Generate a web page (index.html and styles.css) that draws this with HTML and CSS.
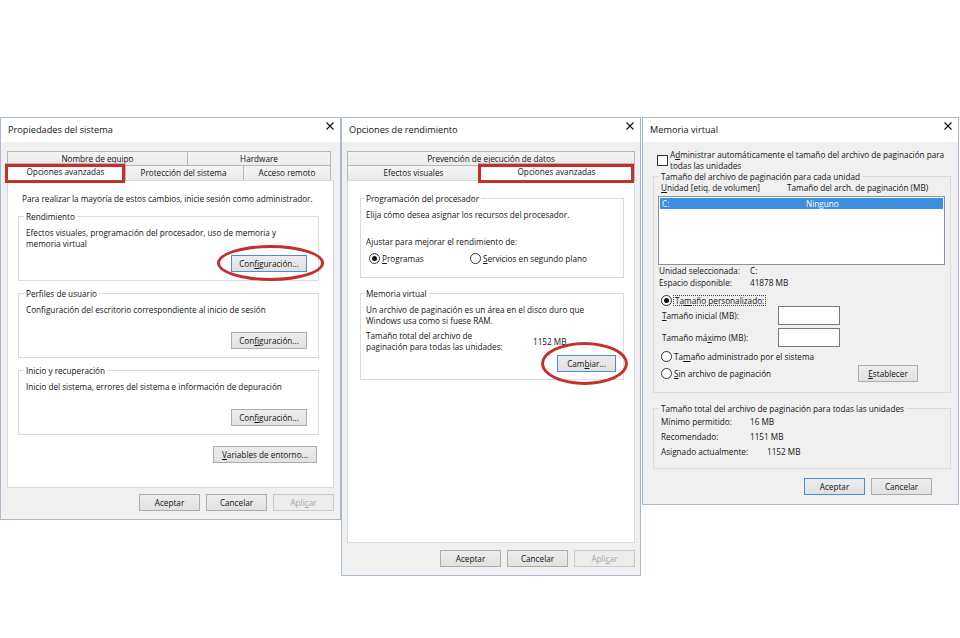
FILE: index.html
```html
<!DOCTYPE html>
<html lang="es">
<head>
    <meta charset="UTF-8">
    <meta name="viewport" content="width=device-width, initial-scale=1.0">
    <title>Memoria virtual</title>
    <link rel="stylesheet" href="styles.css">
</head>
<body>
<div class="desk">

    <!-- Propiedades del sistema -->
    <div class="dialog dlg-system">
        <div class="titlebar">
            <span class="title">Propiedades del sistema</span>
            <svg class="close" viewBox="0 0 8 8"><path d="M0.5 0.5 7.5 7.5 M7.5 0.5 0.5 7.5"/></svg>
        </div>
        <div class="client">
            <div class="tabs">
                <div class="tab-row back">
                    <div class="tab t-equipo">Nombre de equipo</div>
                    <div class="tab t-hardware">Hardware</div>
                </div>
                <div class="tab-row front">
                    <div class="tab current t-avanzadas">Opciones avanzadas</div>
                    <div class="tab t-proteccion">Protección del sistema</div>
                    <div class="tab t-remoto">Acceso remoto</div>
                </div>
            </div>
            <div class="panel">
                <p class="intro">Para realizar la mayoría de estos cambios, inicie sesión como administrador.</p>

                <fieldset class="group">
                    <legend>Rendimiento</legend>
                    <p class="gtext">Efectos visuales, programación del procesador, uso de memoria y<br>memoria virtual</p>
                    <div class="btn-row">
                        <span class="mark mark-config">
                            <button class="btn btn-config focus">Con<u>f</u>iguración...</button>
                        </span>
                    </div>
                </fieldset>

                <fieldset class="group">
                    <legend>Perfiles de usuario</legend>
                    <p class="gtext">Configuración del escritorio correspondiente al inicio de sesión</p>
                    <div class="btn-row">
                        <button class="btn btn-config">Con<u>f</u>iguración...</button>
                    </div>
                </fieldset>

                <fieldset class="group">
                    <legend>Inicio y recuperación</legend>
                    <p class="gtext">Inicio del sistema, errores del sistema e información de depuración</p>
                    <div class="btn-row">
                        <button class="btn btn-config">Con<u>f</u>iguración...</button>
                    </div>
                </fieldset>

                <div class="wide-row">
                    <button class="btn btn-env"><u>V</u>ariables de entorno...</button>
                </div>
            </div>
            <div class="footer">
                <button class="btn">Aceptar</button>
                <button class="btn">Cancelar</button>
                <button class="btn" disabled>Apli<u>c</u>ar</button>
            </div>
        </div>
    </div>

    <!-- Opciones de rendimiento -->
    <div class="dialog dlg-perf">
        <div class="titlebar">
            <span class="title">Opciones de rendimiento</span>
            <svg class="close" viewBox="0 0 8 8"><path d="M0.5 0.5 7.5 7.5 M7.5 0.5 0.5 7.5"/></svg>
        </div>
        <div class="client">
            <div class="tabs">
                <div class="tab-row back">
                    <div class="tab t-dep">Prevención de ejecución de datos</div>
                </div>
                <div class="tab-row front">
                    <div class="tab t-efectos">Efectos visuales</div>
                    <div class="tab current t-avanzadas2">Opciones avanzadas</div>
                </div>
            </div>
            <div class="panel">
                <fieldset class="group g-cpu">
                    <legend>Programación del procesador</legend>
                    <p>Elija cómo desea asignar los recursos del procesador.</p>
                    <p class="adjust">Ajustar para mejorar el rendimiento de:</p>
                    <div class="radio-row">
                        <label class="radio-opt first"><span class="radio checked"></span><span><u>P</u>rogramas</span></label>
                        <label class="radio-opt"><span class="radio"></span><span><u>S</u>ervicios en segundo plano</span></label>
                    </div>
                </fieldset>

                <fieldset class="group g-vmem">
                    <legend>Memoria virtual</legend>
                    <p>Un archivo de paginación es un área en el disco duro que<br>Windows usa como si fuese RAM.</p>
                    <div class="total-row">
                        <span class="total-label">Tamaño total del archivo de<br>paginación para todas las unidades:</span>
                        <span>1152 MB</span>
                    </div>
                    <div class="btn-row">
                        <span class="mark mark-change">
                            <button class="btn btn-change focus">Cam<u>b</u>iar...</button>
                        </span>
                    </div>
                </fieldset>
            </div>
            <div class="footer">
                <button class="btn">Aceptar</button>
                <button class="btn">Cancelar</button>
                <button class="btn" disabled>Apli<u>c</u>ar</button>
            </div>
        </div>
    </div>

    <!-- Memoria virtual -->
    <div class="dialog dlg-vm">
        <div class="titlebar">
            <span class="title">Memoria virtual</span>
            <svg class="close" viewBox="0 0 8 8"><path d="M0.5 0.5 7.5 7.5 M7.5 0.5 0.5 7.5"/></svg>
        </div>
        <div class="client">
            <label class="check-row">
                <span class="checkbox"></span>
                <span>A<u>d</u>ministrar automáticamente el tamaño del archivo de paginación para<br>todas las unidades</span>
            </label>

            <fieldset class="group g-drive">
                <legend>Tamaño del archivo de paginación para cada unidad</legend>
                <div class="cols">
                    <span class="col-drive"><u>U</u>nidad [etiq. de volumen]</span>
                    <span>Tamaño del arch. de paginación (MB)</span>
                </div>
                <div class="listbox">
                    <div class="list-item selected">
                        <span class="item-drive">C:</span>
                        <span>Ninguno</span>
                    </div>
                </div>
                <div class="info">
                    <span class="info-label">Unidad seleccionada:</span><span>C:</span>
                </div>
                <div class="info">
                    <span class="info-label">Espacio disponible:</span><span>41878 MB</span>
                </div>

                <label class="radio-line custom">
                    <span class="radio checked"></span>
                    <span class="focus-box">Ta<u>m</u>año personalizado:</span>
                </label>
                <div class="size-row">
                    <span class="size-label"><u>T</u>amaño inicial (MB):</span>
                    <span class="input"></span>
                </div>
                <div class="size-row second">
                    <span class="size-label">Tamaño má<u>x</u>imo (MB):</span>
                    <span class="input"></span>
                </div>
                <label class="radio-line managed">
                    <span class="radio"></span>
                    <span>Ta<u>m</u>año administrado por el sistema</span>
                </label>
                <div class="radio-line none">
                    <span class="radio"></span>
                    <span><u>S</u>in archivo de paginación</span>
                    <button class="btn btn-set"><u>E</u>stablecer</button>
                </div>
            </fieldset>

            <fieldset class="group g-totals">
                <legend>Tamaño total del archivo de paginación para todas las unidades</legend>
                <div class="trow"><span class="t-label">Mínimo permitido:</span><span>16 MB</span></div>
                <div class="trow"><span class="t-label">Recomendado:</span><span>1151 MB</span></div>
                <div class="trow"><span class="t-label wide">Asignado actualmente:</span><span>1152 MB</span></div>
            </fieldset>

            <div class="footer">
                <button class="btn focus">Aceptar</button>
                <button class="btn">Cancelar</button>
            </div>
        </div>
    </div>

</div>
</body>
</html>
```

FILE: styles.css
```css
*,
*::before,
*::after {
    box-sizing: border-box;
}

body {
    margin: 0;
    background: #fff;
    font-family: "Open Sans", "Noto Sans", sans-serif;
    font-size: 8.2px;
    line-height: 11px;
    color: #141414;
}

p {
    margin: 0;
}

u {
    text-decoration-thickness: 1px;
    text-underline-offset: 1px;
}

.desk {
    display: flex;
    align-items: flex-start;
    padding-top: 117px;
    height: 638px;
    overflow: hidden;
}

/* window frame */
.dialog {
    display: flex;
    flex-direction: column;
    flex: none;
    background: #f0f0f0;
    border: 1px solid #a9b9d1;
}

.dlg-system {
    width: 341px;
    height: 403px;
}

.dlg-perf {
    width: 300px;
    height: 459px;
}

.dlg-vm {
    width: 317px;
    height: 388px;
    margin-left: 1px;
}

.titlebar {
    flex: none;
    height: 24px;
    background: #fff;
    display: flex;
    justify-content: space-between;
    padding: 0 6px 0 7px;
}

.title {
    font-size: 9.2px;
    line-height: 24px;
}

.close {
    width: 8px;
    height: 8px;
    margin-top: 4px;
    stroke: #111;
    stroke-width: 1.1;
    fill: none;
}

.client {
    flex: 1;
    display: flex;
    flex-direction: column;
}

.dlg-system .client {
    padding: 9px 6px 0;
}

.dlg-perf .client {
    padding: 9px 5px 0;
}

.dlg-vm .client {
    padding: 7px 7px 0 10px;
}

/* tabs */
.tabs {
    display: flex;
    flex-direction: column;
}

.tab-row {
    display: flex;
}

.tab-row.back {
    height: 14px;
}

.tab-row.front {
    height: 15px;
    position: relative;
    z-index: 1;
}

.tab {
    flex: none;
    border: 1px solid #b7b7b7;
    border-bottom: none;
    background: linear-gradient(#f4f4f4, #ebebeb);
    text-align: center;
    line-height: 13px;
    white-space: nowrap;
}

.tab + .tab {
    margin-left: -1px;
}

.tab.current {
    position: relative;
    background: #fff;
    height: 18px;
    margin: -2px -2px -1px -2px;
    line-height: 16px;
    z-index: 2;
}

.tab.current::after {
    content: '';
    position: absolute;
    top: 0;
    bottom: -2px;
    left: -1px;
    right: 0;
    border: 3px solid #c4302b;
}

.t-equipo { width: 181px; }
.t-hardware { width: 144px; }
.t-avanzadas { width: 121px; }
.t-proteccion { width: 121px; }
.t-remoto { width: 88px; }

.t-dep { width: 288px; }
.t-efectos { width: 133px; }
.t-avanzadas2 { width: 157px; }

.panel {
    position: relative;
    background: #fff;
    border: 1px solid #d9d9d9;
}

.dlg-system .panel {
    height: 308px;
    padding: 12px 0 0 10px;
}

.dlg-perf .panel {
    height: 363px;
    padding: 12px 0 0 12px;
}

.intro {
    margin-left: 4px;
    white-space: nowrap;
}

/* group boxes */
.group {
    margin: 0;
    min-width: 0;
    border: 1px solid #dcdcdc;
    padding: 5px 11px 8px 7px;
}

.group legend {
    padding: 0 2px;
    margin-left: -2px;
    line-height: 11px;
}

.dlg-system .group {
    width: 301px;
    margin-top: 7px;
}

.gtext {
    height: 22px;
}

.btn-row {
    display: flex;
    justify-content: flex-end;
    margin-top: 6px;
}

.wide-row {
    width: 301px;
    display: flex;
    justify-content: flex-end;
    padding-right: 2px;
    margin-top: 11px;
}

/* buttons */
.btn {
    font: inherit;
    color: inherit;
    width: 61px;
    height: 17px;
    padding: 0;
    border: 1px solid #adadad;
    background: linear-gradient(#ececec, #e1e1e1);
    line-height: 15px;
    text-align: center;
    white-space: nowrap;
}

.btn.focus {
    border-color: #4a8fd6;
}

.btn:disabled {
    color: #a6a6a6;
    border-color: #c9c9c9;
    background: #ececec;
}

.btn-config { width: 76px; }
.btn-env { width: 104px; }
.btn-change { width: 59px; }
.btn-set { width: 60px; margin-left: auto; margin-right: 27px; }

.footer {
    display: flex;
    justify-content: flex-end;
    gap: 6px;
}

.dlg-system .footer { margin-top: 6px; }
.dlg-perf .footer { margin-top: 7px; }
.dlg-vm .footer { margin-top: 9px; margin-right: 19px; }

/* hand-drawn red ellipses */
.mark {
    position: relative;
    display: inline-flex;
}

.mark::after {
    content: '';
    position: absolute;
    border: 3px solid #c4302b;
    border-radius: 50%;
}

.mark-config::after {
    left: -14px;
    top: -10px;
    width: 107px;
    height: 36px;
}

.mark-change::after {
    left: -16px;
    top: -13px;
    width: 87px;
    height: 43px;
}

/* radio / checkbox */
.radio {
    position: relative;
    flex: none;
    width: 11px;
    height: 11px;
    border: 1px solid #333;
    border-radius: 50%;
    background: #fff;
}

.radio.checked::after {
    content: '';
    position: absolute;
    left: 2px;
    top: 2px;
    width: 5px;
    height: 5px;
    border-radius: 50%;
    background: #111;
}

.checkbox {
    flex: none;
    width: 11px;
    height: 11px;
    border: 1px solid #333;
    background: #fff;
    margin-right: 2px;
}

/* Opciones de rendimiento */
.dlg-perf .group {
    width: 264px;
}

.g-cpu {
    padding: 5px 7px 13px 5px;
}

.adjust {
    margin-top: 16px;
}

.radio-row {
    display: flex;
    align-items: center;
    height: 11px;
    margin-top: 6px;
    margin-left: 3px;
}

.radio-opt {
    display: flex;
    align-items: center;
    gap: 2px;
}

.radio-opt.first {
    width: 101px;
}

.g-vmem {
    margin-top: 10px;
    padding: 5px 7px 7px 5px;
}

.total-row {
    display: flex;
    align-items: center;
    margin-top: 4px;
}

.total-label {
    width: 167px;
}

.g-vmem .btn-row {
    margin-top: 3px;
}

/* Memoria virtual */
.check-row {
    display: flex;
    align-items: center;
    padding-left: 4px;
}

.g-drive,
.g-totals {
    padding: 0 5px 10px 7px;
}

.cols {
    display: flex;
    white-space: nowrap;
}

.col-drive {
    width: 126px;
}

.listbox {
    width: 287px;
    height: 69px;
    margin: 3px 0 0 -3px;
    padding: 1px;
    border: 1px solid #8d9199;
    background: #fff;
}

.list-item {
    display: flex;
    height: 11px;
    padding-left: 2px;
}

.list-item.selected {
    background: #3f8fe0;
    color: #fff;
}

.item-drive {
    width: 144px;
}

.info {
    display: flex;
    line-height: 12px;
    margin-left: -2px;
}

.info:first-of-type {
    margin-top: 1px;
}

.info-label {
    width: 91px;
}

.radio-line {
    display: flex;
    align-items: center;
    gap: 2px;
}

.radio-line.custom {
    height: 11px;
    margin-top: 6px;
}

.focus-box {
    border: 1px dotted #444;
    line-height: 9px;
    padding: 0 1px;
    margin-left: -1px;
}

.size-row {
    display: flex;
    align-items: center;
    height: 19px;
    margin-left: 1px;
}

.size-row.second {
    margin-top: 3px;
}

.size-label {
    width: 116px;
}

.input {
    width: 62px;
    height: 19px;
    border: 1px solid #7a7a7a;
    background: #fff;
}

.radio-line.managed {
    height: 11px;
    margin-top: 4px;
}

.radio-line.none {
    height: 17px;
    margin-top: 3px;
}

.g-totals {
    margin-top: 10px;
    padding-bottom: 9px;
}

.trow {
    display: flex;
    line-height: 15px;
}

.t-label {
    width: 89px;
}

.t-label.wide {
    width: 106px;
}
```
